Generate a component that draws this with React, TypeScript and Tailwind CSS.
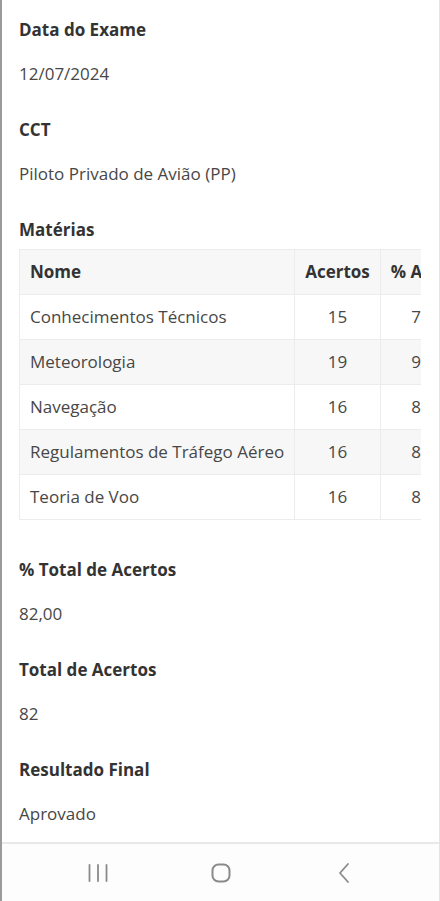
import React from "react";

const materias = [
  { nome: "Conhecimentos Técnicos", acertos: 15, pct: "75,00" },
  { nome: "Meteorologia", acertos: 19, pct: "95,00" },
  { nome: "Navegação", acertos: 16, pct: "80,00" },
  { nome: "Regulamentos de Tráfego Aéreo", acertos: 16, pct: "80,00" },
  { nome: "Teoria de Voo", acertos: 16, pct: "80,00" },
];

function Field({ label, value }: { label: string; value: string }) {
  return (
    <div className="mb-8">
      <div className="text-[17px] font-bold leading-6 text-[#333]">{label}</div>
      <div className="mt-5 text-[17px] leading-6 text-[#474747]">{value}</div>
    </div>
  );
}

export default function App() {
  return (
    <div
      className="flex h-[901px] w-[440px] flex-col overflow-hidden border-l-2 border-r border-l-[#9a9a9a] border-r-[#e4e4e4] bg-white"
      style={{ fontFamily: '"Open Sans", sans-serif' }}
    >
      <main className="h-[842px] overflow-hidden px-[17px] pt-[18px]">
        <Field label="Data do Exame" value="12/07/2024" />
        <Field label="CCT" value="Piloto Privado de Avião (PP)" />

        <div className="text-[17px] font-bold leading-6 text-[#333]">Matérias</div>
        <div className="mt-[7px] mb-[38px] w-[402px] overflow-x-auto">
          <table className="border-collapse whitespace-nowrap text-[17px] leading-6 text-[#474747]">
            <thead>
              <tr className="bg-[#f7f7f7]">
                <th className="border border-[#ececec] px-[10px] py-[10px] text-left font-bold text-[#333]">
                  Nome
                </th>
                <th className="border border-[#ececec] px-[10px] py-[10px] text-center font-bold text-[#333]">
                  Acertos
                </th>
                <th className="border border-[#ececec] px-[10px] py-[10px] text-center font-bold text-[#333]">
                  % Acertos
                </th>
              </tr>
            </thead>
            <tbody>
              {materias.map((m, i) => (
                <tr key={m.nome} className={i % 2 === 1 ? "bg-[#f7f7f7]" : "bg-white"}>
                  <td className="border border-[#ececec] px-[10px] py-[10px]">{m.nome}</td>
                  <td className="border border-[#ececec] px-[10px] py-[10px] text-center">{m.acertos}</td>
                  <td className="border border-[#ececec] px-[10px] py-[10px] text-center">{m.pct}</td>
                </tr>
              ))}
            </tbody>
          </table>
        </div>

        <Field label="% Total de Acertos" value="82,00" />
        <Field label="Total de Acertos" value="82" />
        <Field label="Resultado Final" value="Aprovado" />
      </main>

      <nav className="flex h-[59px] items-center justify-center border-t-2 border-[#e8e8e8] bg-[#fdfdfd]">
        <div className="flex w-[123px] justify-center">
          <svg width="22" height="20" viewBox="0 0 22 20" className="text-[#8a8a8a]">
            <path d="M2.5 2v16M11 2v16M19.5 2v16" stroke="currentColor" strokeWidth="1.8" strokeLinecap="round" />
          </svg>
        </div>
        <div className="flex w-[123px] justify-center">
          <svg width="22" height="22" viewBox="0 0 22 22" className="text-[#8a8a8a]">
            <rect x="2.5" y="2.5" width="17" height="17" rx="6" fill="none" stroke="currentColor" strokeWidth="2" />
          </svg>
        </div>
        <div className="flex w-[123px] justify-center">
          <svg width="14" height="22" viewBox="0 0 14 22" className="text-[#8a8a8a]">
            <path d="M11 2 3 11l8 9" fill="none" stroke="currentColor" strokeWidth="1.8" strokeLinecap="round" strokeLinejoin="round" />
          </svg>
        </div>
      </nav>
    </div>
  );
}
